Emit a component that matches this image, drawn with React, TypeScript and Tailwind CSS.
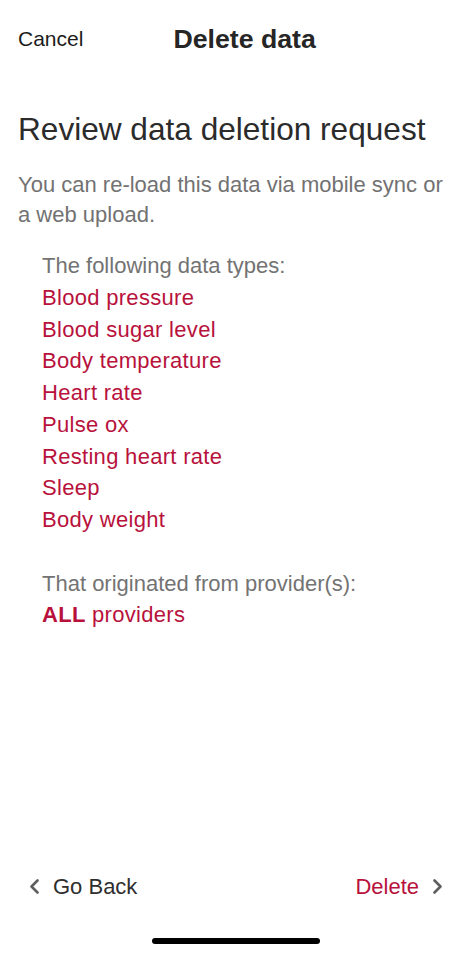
const dataTypes = [
  "Blood pressure",
  "Blood sugar level",
  "Body temperature",
  "Heart rate",
  "Pulse ox",
  "Resting heart rate",
  "Sleep",
  "Body weight",
];

function Chevron({ dir }: { dir: "left" | "right" }) {
  return (
    <svg width="11" height="15" viewBox="0 0 11 15" fill="none" className="shrink-0">
      <path
        d={dir === "left" ? "M8.5 1.5 L2.5 7.5 L8.5 13.5" : "M2.5 1.5 L8.5 7.5 L2.5 13.5"}
        stroke="#5f5f5f"
        strokeWidth="2.6"
        strokeLinecap="round"
        strokeLinejoin="round"
      />
    </svg>
  );
}

export default function App() {
  return (
    <div
      className="flex h-[955px] w-full flex-col bg-white"
      style={{ fontFamily: '"Liberation Sans", Arial, Helvetica, sans-serif' }}
    >
      {/* Header */}
      <div className="flex h-[78px] items-center px-[18px]">
        <span className="text-[21px] text-[#1c1c1c]">Cancel</span>
        <span className="ml-[90px] text-[26.7px] font-bold text-[#262626]">Delete data</span>
      </div>

      <div className="px-[18px]">
        <h1 className="mt-[31px] text-[31.6px] leading-[40px] text-[#2b2b2b]">
          Review data deletion request
        </h1>

        <p className="mt-[21px] text-[22px] leading-[30px] text-[#727272]">
          You can re-load this data via mobile sync or a web upload.
        </p>

        {/* Summary */}
        <div className="mt-[20px] pl-[24px] text-[22px] leading-[31.75px]">
          <p className="text-[#737373]">The following data types:</p>
          {dataTypes.map((t) => (
            <p key={t} className="tracking-[0.3px] text-[#b8123c]">
              {t}
            </p>
          ))}
          <p className="mt-[31.75px] text-[#737373]">That originated from provider(s):</p>
          <p className="tracking-[0.3px] text-[#b8123c]">
            <span className="font-bold">ALL</span> providers
          </p>
        </div>
      </div>

      <div className="flex-1" />

      {/* Footer nav */}
      <div className="flex h-[44px] items-center justify-between px-[29px] text-[22px]">
        <div className="flex items-center gap-[13px]">
          <Chevron dir="left" />
          <span className="text-[#2e2e2e]">Go Back</span>
        </div>
        <div className="flex items-center gap-[13px]">
          <span className="text-[#b8123c]">Delete</span>
          <Chevron dir="right" />
        </div>
      </div>

      {/* Home indicator */}
      <div className="mt-[30px] mb-[11px] flex justify-center">
        <div className="h-[6px] w-[168px] rounded-full bg-black" />
      </div>
    </div>
  );
}
